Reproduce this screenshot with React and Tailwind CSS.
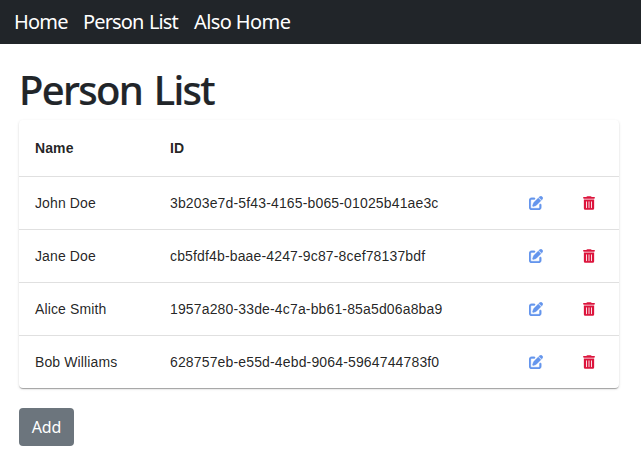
import { FaPenToSquare, FaTrashCan } from "react-icons/fa6";

const people = [
  { name: "John Doe", id: "3b203e7d-5f43-4165-b065-01025b41ae3c" },
  { name: "Jane Doe", id: "cb5fdf4b-baae-4247-9c87-8cef78137bdf" },
  { name: "Alice Smith", id: "1957a280-33de-4c7a-bb61-85a5d06a8ba9" },
  { name: "Bob Williams", id: "628757eb-e55d-4ebd-9064-5964744783f0" },
];

function NavBar() {
  return (
    <nav className="flex h-11 items-center bg-[#212529] pl-[14px] text-[20px] leading-[30px] text-white">
      <a className="w-[69px] whitespace-nowrap tracking-[-0.8px]">Home</a>
      <a className="w-[111px] whitespace-nowrap tracking-[-0.85px] [word-spacing:1px]">Person List</a>
      <a className="whitespace-nowrap tracking-[-0.6px]">Also Home</a>
    </nav>
  );
}

function PersonTable() {
  return (
    <div className="w-[600px] rounded bg-white font-['Liberation_Sans',Arial,sans-serif] text-[14px] leading-5 text-black/87 shadow-[0_2px_1px_-1px_rgba(0,0,0,0.2),0_1px_1px_0_rgba(0,0,0,0.14),0_1px_3px_0_rgba(0,0,0,0.12)]">
      <div className="flex h-14 items-center pl-4 font-bold">
        <span className="w-[135px] tracking-[0.1px]">Name</span>
        <span>ID</span>
      </div>
      {people.map((person) => (
        <div key={person.id} className="flex h-[53px] items-center border-t border-black/12 pl-4">
          <span className="w-[135px] tracking-[0.12px]">{person.name}</span>
          <span className="w-[359px] tracking-[0.15px]">{person.id}</span>
          <button className="w-[54px]" aria-label="Edit">
            <FaPenToSquare className="size-[14px] stroke-[#6495ed] stroke-[14px] text-[#6495ed]" />
          </button>
          <button aria-label="Delete">
            <FaTrashCan className="h-[14px] w-[12px] text-[#dc143c]" />
          </button>
        </div>
      ))}
    </div>
  );
}

export default function App() {
  return (
    <div className="h-[465px] overflow-hidden bg-white font-['Noto_Sans','Open_Sans',sans-serif] text-[#212529]">
      <NavBar />
      <main className="pl-[19px] pt-[22px]">
        <h1 className="mb-[6px] whitespace-nowrap text-[40px] font-medium leading-[48px] tracking-[-1.7px] [-webkit-text-stroke:0.2px_#212529] [word-spacing:3px]">Person List</h1>
        <PersonTable />
        <button className="mt-5 h-[38px] w-[55px] rounded bg-[#6c757d] text-[16px] leading-6 tracking-[-0.2px] text-white">Add</button>
      </main>
    </div>
  );
}
